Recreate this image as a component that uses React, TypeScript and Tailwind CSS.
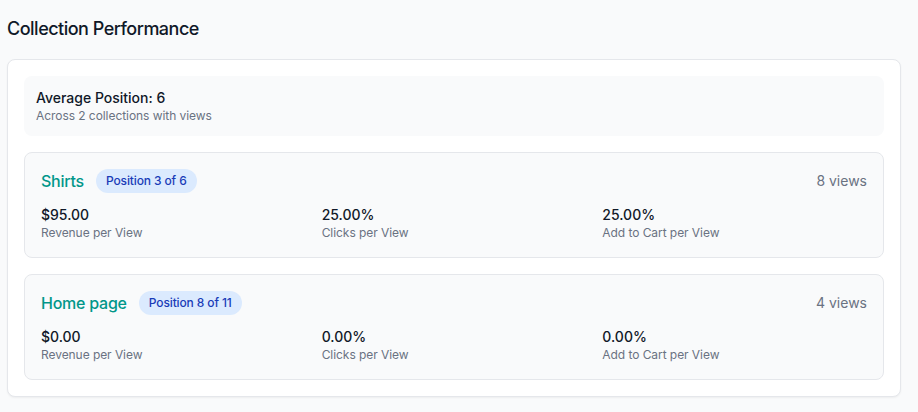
import React from 'react';

interface Collection {
    name: string;
    position: number;
    total: number;
    views: number;
    revenue: string;
    clicks: string;
    cart: string;
}

const collections: Collection[] = [
    { name: 'Shirts', position: 3, total: 6, views: 8, revenue: '$95.00', clicks: '25.00%', cart: '25.00%' },
    { name: 'Home page', position: 8, total: 11, views: 4, revenue: '$0.00', clicks: '0.00%', cart: '0.00%' },
];

const Metric: React.FC<{ value: string; label: string }> = ({ value, label }) => (
    <div>
        <p className="text-sm leading-5 font-medium text-gray-900">{value}</p>
        <p className="text-xs leading-4 text-gray-500 tracking-[-0.005em]">{label}</p>
    </div>
);

export default function App() {
    return (
        <div className="min-h-screen bg-gray-50 pl-[7px] pr-[17px] pt-[15px] pb-4 font-['Inter',_sans-serif]">
            <h2 className="text-lg leading-7 font-medium text-gray-900 tracking-[-0.028em] mb-[16px]">Collection Performance</h2>

            <div className="bg-white border border-gray-200 rounded-lg shadow-xs p-4">
                <div className="bg-gray-50 rounded-lg p-3 mb-4">
                    <p className="text-sm leading-5 font-medium text-gray-900">Average Position: 6</p>
                    <p className="text-xs leading-4 text-gray-500 tracking-[-0.005em]">Across 2 collections with views</p>
                </div>

                <div className="space-y-4">
                    {collections.map((c) => (
                        <div key={c.name} className="bg-gray-50 border border-gray-200 rounded-lg p-4">
                            <div className="flex items-center justify-between">
                                <div className="flex items-center gap-3">
                                    <h3 className="text-base leading-6 font-medium text-teal-600 tracking-[-0.015em]">{c.name}</h3>
                                    <span className="inline-flex items-center rounded-full bg-blue-100 px-2.5 py-1 text-xs leading-4 font-medium text-blue-800 tracking-[-0.01em]">
                                        Position {c.position} of {c.total}
                                    </span>
                                </div>
                                <span className="text-sm leading-5 text-gray-500">{c.views} views</span>
                            </div>
                            <div className="grid grid-cols-3 gap-4 mt-3">
                                <Metric value={c.revenue} label="Revenue per View" />
                                <Metric value={c.clicks} label="Clicks per View" />
                                <Metric value={c.cart} label="Add to Cart per View" />
                            </div>
                        </div>
                    ))}
                </div>
            </div>
        </div>
    );
}
